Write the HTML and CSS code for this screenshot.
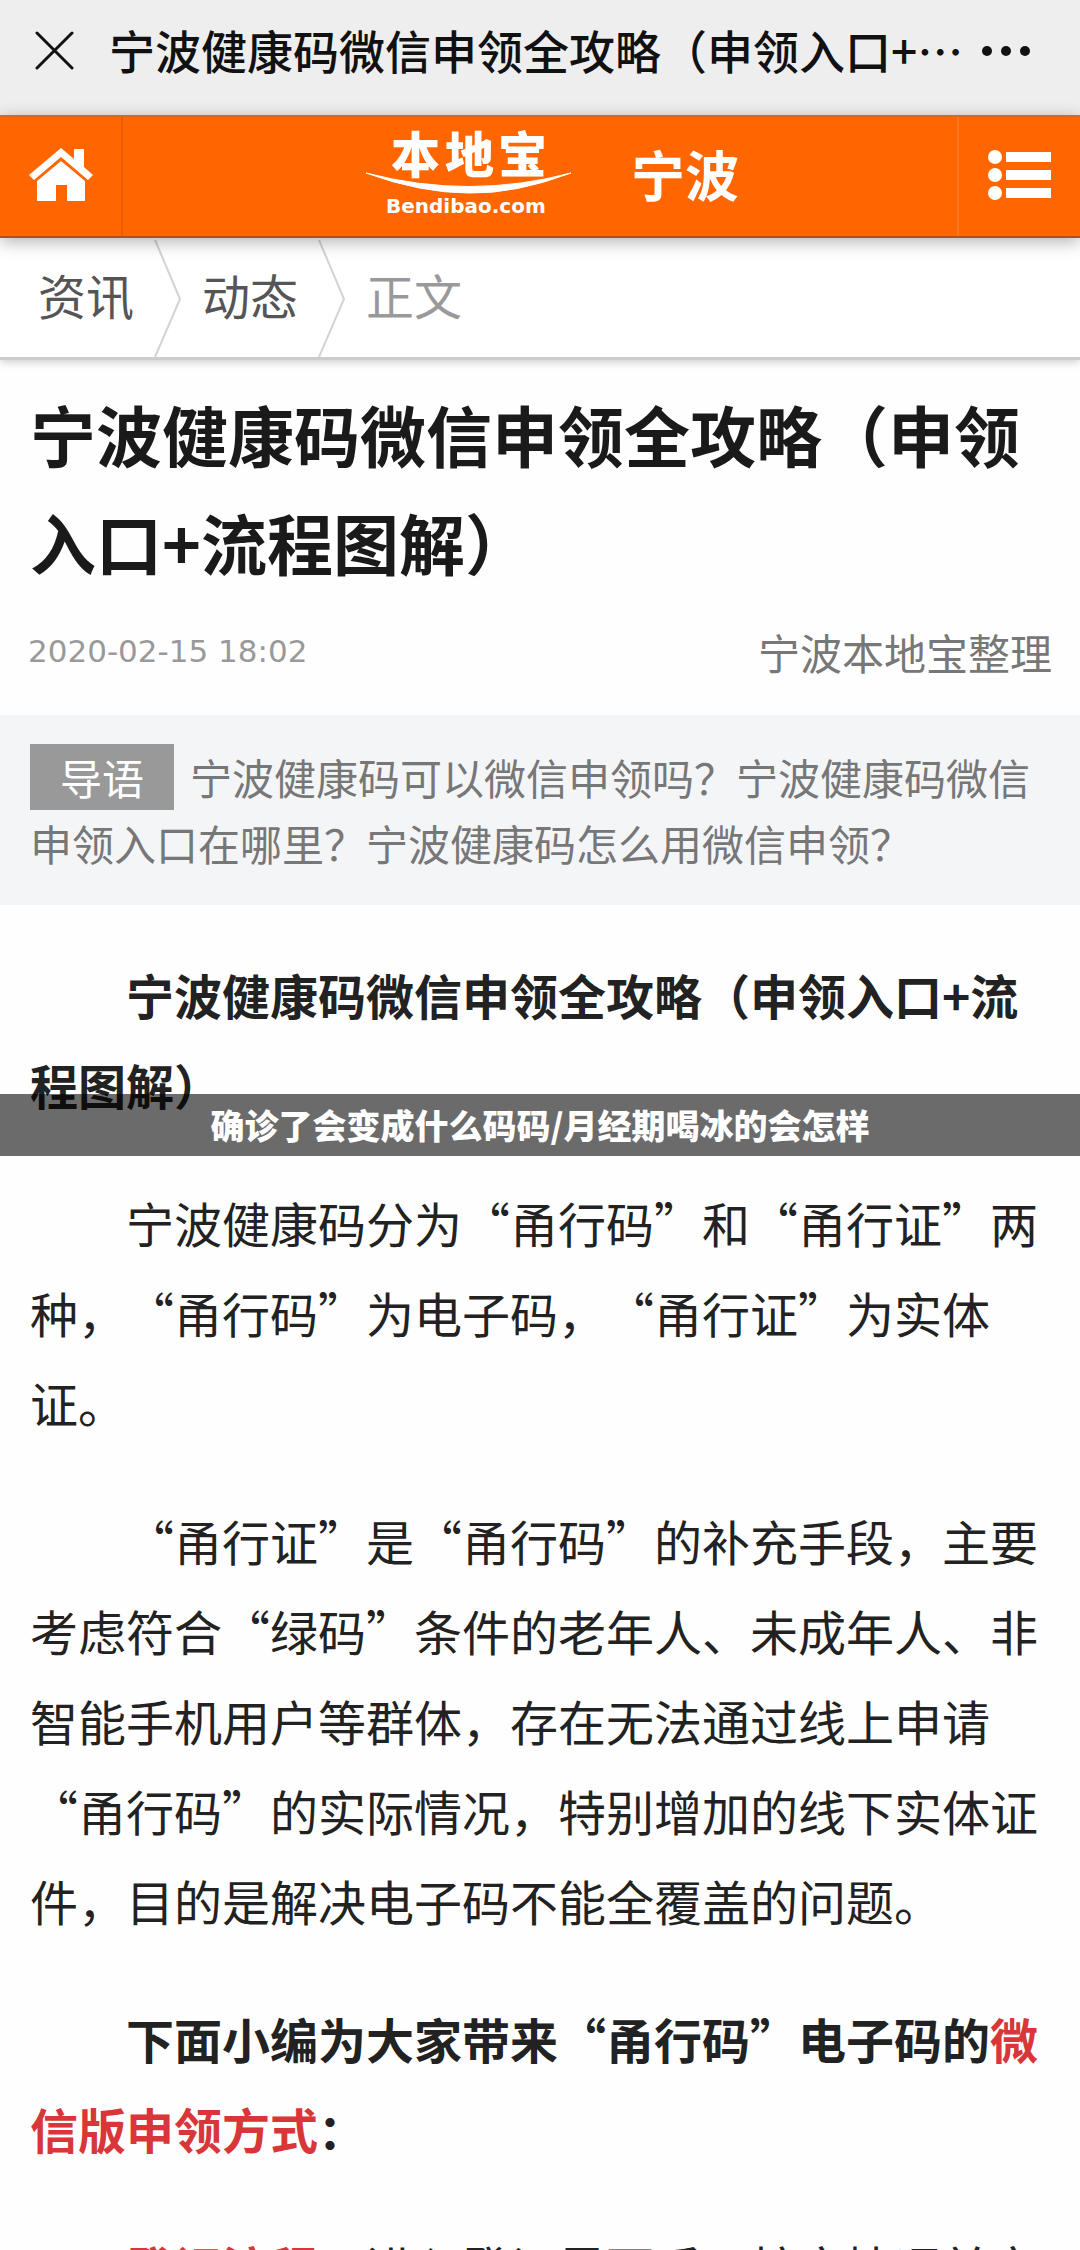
FILE: index.html
```html
<!DOCTYPE html>
<html lang="zh-CN">
<head>
<meta charset="utf-8">
<meta name="viewport" content="width=device-width">
<title>宁波健康码微信申领全攻略（申领入口+流程图解）</title>
<link rel="stylesheet" href="styles.css">
</head>
<body>

<div class="appbar">
  <button class="appbar-btn" aria-label="关闭">
    <svg width="40" height="40" viewBox="0 0 40 40"><path d="M2 2 L37 37 M37 2 L2 37" stroke="#111" stroke-width="3" stroke-linecap="round"/></svg>
  </button>
  <div class="appbar-title">宁波健康码微信申领全攻略（申领入口+…</div>
  <button class="appbar-btn" aria-label="更多">
    <svg width="52" height="12" viewBox="0 0 52 12" fill="#111"><circle cx="7" cy="6" r="5"/><circle cx="26" cy="6" r="5"/><circle cx="45" cy="6" r="5"/></svg>
  </button>
</div>

<header class="header">
  <a class="home" href="#" aria-label="首页">
    <svg width="66" height="56" viewBox="0 0 66 56" fill="#fff">
      <path d="M33 1 L46 12 V2 H56 V20 L65 28 L60 33 L33 10 L6 33 L1 28 Z"/>
      <path d="M33 14 L57 34 V54 H39 V38 H28 V54 H9 V34 Z"/>
    </svg>
  </a>
  <div class="brand">
    <a class="logo" href="#" aria-label="本地宝">
      <svg width="208" height="100" viewBox="0 0 208 100" fill="#fff">
        <text class="logo-cn" x="26 80 133" y="46">本地宝</text>
        <path d="M1 46 Q104 73 206 46 Q150 67 104 66 Q56 66 1 46 Z" stroke="#fff" stroke-width="1"/>
        <text class="logo-en" x="21" y="86">Bendibao.com</text>
      </svg>
    </a>
    <a class="city" href="#">宁波</a>
  </div>
  <button class="menu" aria-label="菜单">
    <svg width="64" height="52" viewBox="0 0 64 52" fill="#fff">
      <circle cx="7" cy="8" r="7"/><circle cx="7" cy="26" r="7"/><circle cx="7" cy="44" r="7"/>
      <path d="M18 3h45v10H18z M18 21h45v10H18z M18 39h45v10H18z"/>
    </svg>
  </button>
</header>

<nav class="crumbs">
  <a href="#">资讯</a>
  <svg width="28" height="118" viewBox="0 0 28 118"><path d="M1 1 L26 60 L1 118" fill="none" stroke="#d3d3d3" stroke-width="2"/></svg>
  <a href="#">动态</a>
  <svg width="28" height="118" viewBox="0 0 28 118"><path d="M1 1 L26 60 L1 118" fill="none" stroke="#d3d3d3" stroke-width="2"/></svg>
  <span>正文</span>
</nav>

<main>
  <h1>宁波健康码微信申领全攻略（申领入口+流程图解）</h1>
  <div class="info">
    <time>2020-02-15 18:02</time>
    <span>宁波本地宝整理</span>
  </div>
  <p class="lead"><span class="tag">导语</span>宁波健康码可以微信申领吗？宁波健康码微信申领入口在哪里？宁波健康码怎么用微信申领？</p>

  <article class="content">
    <p><strong>宁波健康码微信申领全攻略（申领入口+流程图解）</strong></p>
    <p>宁波健康码分为“甬行码”和“甬行证”两种，“甬行码”为电子码，“甬行证”为实体证。</p>
    <p>“甬行证”是“甬行码”的补充手段，主要考虑符合“绿码”条件的老年人、未成年人、非智能手机用户等群体，存在无法通过线上申请“甬行码”的实际情况，特别增加的线下实体证件，目的是解决电子码不能全覆盖的问题。</p>
    <p><strong>下面小编为大家带来“甬行码”电子码的<em>微信版申领方式</em>：</strong></p>
    <p><strong><em>登记流程</em></strong>：进入登记界面后，核实情况并完</p>
  </article>
</main>

<div class="banner">确诊了会变成什么码码/月经期喝冰的会怎样</div>

</body>
</html>
```
FILE: styles.css
```css
* {
  box-sizing: border-box;
}
html {
  height: 100%;
  overflow: hidden;
}
body {
  margin: 0;
  height: 100%;
  overflow: hidden;
  position: relative;
  background: #fefefe;
  color: #222;
  font-family: "Noto Sans CJK SC", sans-serif;
  font-size: 48px;
  text-spacing-trim: space-all;
}
a {
  color: inherit;
  text-decoration: none;
}
button {
  padding: 0;
  border: 0;
  background: none;
}
svg {
  display: block;
}

/* top bar of the app */
.appbar {
  display: flex;
  align-items: center;
  height: 115px;
  padding: 0 48px 14px 35px;
  background: #eee;
}
.appbar-title {
  flex: 1;
  margin-left: 34px;
  padding-bottom: 4px;
  overflow: hidden;
  white-space: nowrap;
  color: #111;
  font-size: 46px;
  font-weight: 500;
}

/* site header */
.header {
  display: flex;
  height: 123px;
  background: #f60;
  border-top: 2px solid #d9681c;
  border-bottom: 2px solid #b5500f;
  box-shadow: 0 4px 16px rgba(0,0,0,.3);
  position: relative;
  color: #fff;
}
.home, .menu {
  display: flex;
  align-items: center;
  justify-content: center;
  width: 123px;
  padding-bottom: 4px;
}
.home {
  border-right: 2px solid #e65c00;
}
.menu {
  border-left: 2px solid #ff7519;
}
.brand {
  flex: 1;
  display: flex;
  align-items: center;
  justify-content: center;
  gap: 58px;
  padding-left: 24px;
}
.logo-cn {
  font-size: 49px;
  font-weight: 900;
}
.logo-en {
  font-family: "DejaVu Sans", sans-serif;
  font-size: 20px;
  font-weight: bold;
}
.city {
  padding-bottom: 6px;
  font-size: 54px;
  font-weight: bold;
}

.crumbs {
  display: flex;
  align-items: center;
  height: 122px;
  padding-left: 38px;
  background: #fff;
  border-bottom: 3px solid #ccc;
  box-shadow: 0 2px 8px rgba(0,0,0,.2);
  color: #555;
}
.crumbs svg {
  margin: 0 20px;
}
.crumbs a, .crumbs span {
  padding-bottom: 8px;
}
.crumbs span {
  color: #999;
}

/* article */
h1 {
  margin: 0;
  padding: 19px 30px 0;
  color: #1a1a1a;
  font-size: 66px;
  font-weight: bold;
  line-height: 108px;
}
.info {
  display: flex;
  justify-content: space-between;
  align-items: center;
  height: 112px;
  padding: 0 28px;
  color: #777;
  font-size: 42px;
}
.info time {
  color: #999;
  font-family: "DejaVu Sans", sans-serif;
  font-size: 31px;
}
.lead {
  margin: 8px 0 0;
  padding: 29px 30px;
  background: #f4f5f7;
  color: #777;
  font-size: 42px;
  line-height: 66px;
}
.tag {
  display: inline-block;
  margin-right: 16px;
  padding: 0 30px;
  background: #999;
  color: #fff;
}
.content {
  padding: 44px 30px 0;
  line-height: 90px;
}
.content p {
  margin: 0 0 48px;
  text-indent: 2em;
}
.content em {
  color: #d9363a;
  font-style: normal;
}

/* caption strip over the page */
.banner {
  position: absolute;
  top: 1094px;
  left: 0;
  right: 0;
  background: rgba(0,0,0,.58);
  color: #fff;
  font-size: 34px;
  font-weight: 900;
  line-height: 62px;
  text-align: center;
}
```
